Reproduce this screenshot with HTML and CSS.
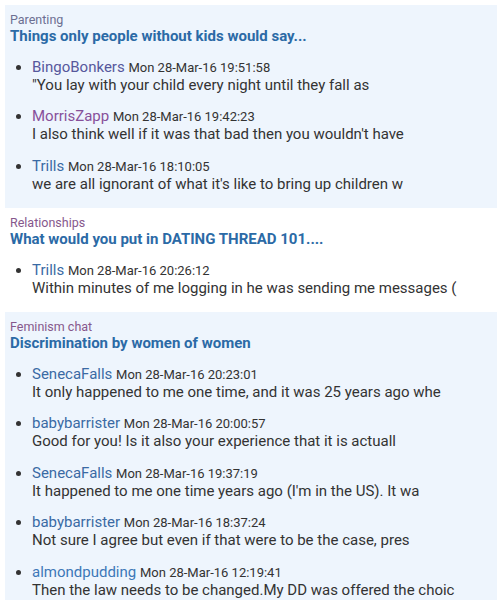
FILE: index.html
```html
<!DOCTYPE html>
<html>
<head>
<meta charset="utf-8">
<link rel="stylesheet" href="styles.css">
</head>
<body>
<div class="feed">
  <section class="thread shaded">
    <div class="category cat-a">Parenting</div>
    <div class="title">Things only people without kids would say...</div>
    <ul class="posts">
      <li><div class="head"><span class="user u-indigo">BingoBonkers</span> <span class="date">Mon 28-Mar-16 19:51:58</span></div><div class="msg">"You lay with your child every night until they fall as</div></li>
      <li><div class="head"><span class="user u-purple">MorrisZapp</span> <span class="date">Mon 28-Mar-16 19:42:23</span></div><div class="msg">I also think well if it was that bad then you wouldn't have</div></li>
      <li><div class="head"><span class="user u-blue">Trills</span> <span class="date">Mon 28-Mar-16 18:10:05</span></div><div class="msg">we are all ignorant of what it's like to bring up children w</div></li>
    </ul>
  </section>
  <section class="thread">
    <div class="category cat-b">Relationships</div>
    <div class="title">What would you put in DATING THREAD 101....</div>
    <ul class="posts">
      <li><div class="head"><span class="user u-blue">Trills</span> <span class="date">Mon 28-Mar-16 20:26:12</span></div><div class="msg">Within minutes of me logging in he was sending me messages (</div></li>
    </ul>
  </section>
  <section class="thread shaded">
    <div class="category cat-b">Feminism chat</div>
    <div class="title">Discrimination by women of women</div>
    <ul class="posts">
      <li><div class="head"><span class="user u-blue">SenecaFalls</span> <span class="date">Mon 28-Mar-16 20:23:01</span></div><div class="msg">It only happened to me one time, and it was 25 years ago whe</div></li>
      <li><div class="head"><span class="user u-blue">babybarrister</span> <span class="date">Mon 28-Mar-16 20:00:57</span></div><div class="msg">Good for you! Is it also your experience that it is actuall</div></li>
      <li><div class="head"><span class="user u-blue">SenecaFalls</span> <span class="date">Mon 28-Mar-16 19:37:19</span></div><div class="msg">It happened to me one time years ago (I'm in the US). It wa</div></li>
      <li><div class="head"><span class="user u-blue">babybarrister</span> <span class="date">Mon 28-Mar-16 18:37:24</span></div><div class="msg">Not sure I agree but even if that were to be the case, pres</div></li>
      <li><div class="head"><span class="user u-light">almondpudding</span> <span class="date">Mon 28-Mar-16 12:19:41</span></div><div class="msg">Then the law needs to be changed.My DD was offered the choic</div></li>
    </ul>
  </section>
</div>
</body>
</html>
```

FILE: styles.css
```css
html, body {
  margin: 0;
  padding: 0;
  background: #ffffff;
}
body {
  font-family: Roboto, "Liberation Sans", sans-serif;
  color: #333333;
}
.feed {
  padding: 5px 0 0 5px;
}
.thread {
  padding: 7px 5px 15.5px 5px;
}
.shaded {
  background: #eef5fd;
}
.category {
  font-size: 12.5px;
  line-height: 16px;
  height: 16px;
}
.cat-a { color: #6c6f92; }
.cat-b { color: #86588c; }
.title {
  font-size: 15px;
  line-height: 17px;
  height: 17px;
  font-weight: bold;
  color: #2b6aa6;
  white-space: nowrap;
}
.posts {
  margin: 12.5px 0 0 0;
  padding: 0 0 0 22px;
}
.posts li {
  margin-top: 13.5px;
  font-size: 15px;
  line-height: 18px;
  white-space: nowrap;
}
.posts li:first-child {
  margin-top: 0;
}
.head {
  height: 18px;
  line-height: 18px;
}
.user {
  font-size: 15px;
}
.u-indigo { color: #56589c; }
.u-purple { color: #87509a; }
.u-blue { color: #3a6aa4; }
.u-light { color: #3d78b8; }
.date {
  font-size: 13px;
  color: #333333;
}
.msg {
  font-size: 15px;
  line-height: 18px;
  height: 18px;
  color: #333333;
}
```
